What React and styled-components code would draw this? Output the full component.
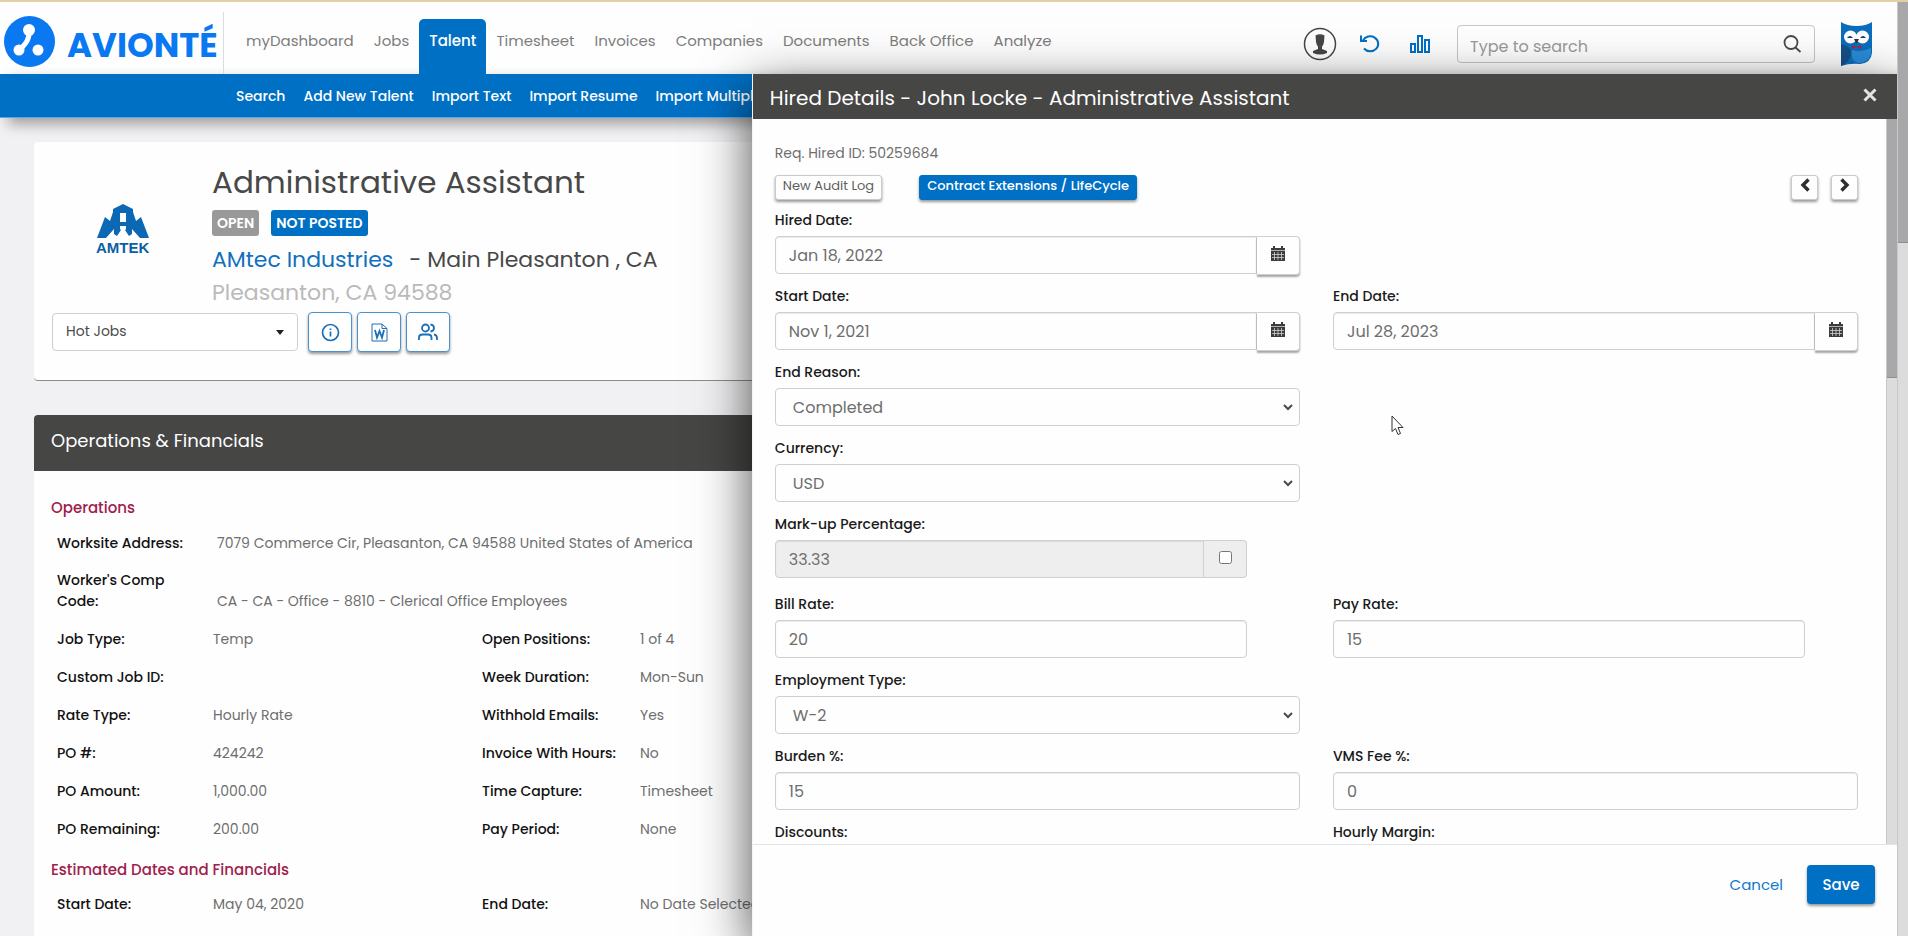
import React from 'react';
import styled, { createGlobalStyle, css } from 'styled-components';

const colors = {
  blue: '#0070c5',
  brand: '#0a78f0',
  dark: '#464645',
  grey: '#6e6e6e',
  crimson: '#a0204c',
  border: '#cfcfd3',
};

const GlobalStyle = createGlobalStyle`
  * { box-sizing: border-box; }
  body { margin: 0; background: #f1f1f3; }
  body, button, input, select { font-family: Poppins, Inter, "Open Sans", sans-serif; font-size: 15px; }
  a { text-decoration: none; }
`;

const menu = ['myDashboard', 'Jobs', 'Talent', 'Timesheet', 'Invoices', 'Companies', 'Documents', 'Back Office', 'Analyze'];

const subMenu = ['Search', 'Add New Talent', 'Import Text', 'Import Resume', 'Import Multiple'];

const operations = [
  ['Job Type:', 'Temp', 'Open Positions:', '1 of 4'],
  ['Custom Job ID:', '', 'Week Duration:', 'Mon-Sun'],
  ['Rate Type:', 'Hourly Rate', 'Withhold Emails:', 'Yes'],
  ['PO #:', '424242', 'Invoice With Hours:', 'No'],
  ['PO Amount:', '1,000.00', 'Time Capture:', 'Timesheet'],
  ['PO Remaining:', '200.00', 'Pay Period:', 'None'],
];

const Shell = styled.div`
  display: grid;
  grid-template-columns: minmax(0, 1fr) 11px;
  height: 100vh;
  overflow: hidden;
  border-top: 2px solid #e2cfa6;
`;

const Page = styled.div`
  position: relative;
  min-width: 0;
  overflow: hidden;
`;

const ScrollTrack = styled.div`
  width: 11px;
  background: #dcdcdc;
  border-left: 1px solid #c8c8c8;
`;

const ScrollThumb = styled.div`
  height: ${({ $size }) => $size};
  background: #a8a8aa;
  border-bottom: 1px solid #8e8e90;
`;

const Header = styled.header`
  display: flex;
  align-items: stretch;
  height: 72px;
  background: #fefefe;
`;

const Brand = styled.a`
  display: flex;
  align-items: center;
  gap: 12px;
  width: 224px;
  margin-top: 10px;
  padding: 4px 0 0 4px;
  border-right: 1px solid #dcdce0;
  color: ${colors.brand};
  font-size: 34px;
  font-weight: 700;
  line-height: 40px;

  svg { margin-bottom: 8px; }
`;

const Menu = styled.nav`
  display: flex;
  align-items: flex-end;
  padding-left: 12px;
`;

const MenuLink = styled.a`
  height: 55px;
  padding: 12px 10px 0;
  border-radius: 5px 5px 0 0;
  color: #7d7d7d;
  font-size: 15px;
  line-height: 20px;

  ${({ $active }) => $active && css`
    background: ${colors.blue};
    color: white;
    font-weight: 500;
  `}
`;

const Tools = styled.div`
  display: flex;
  align-items: center;
  margin-left: auto;
  padding: 12px 25px 0 0;
`;

const IconButton = styled.button`
  display: flex;
  align-items: center;
  justify-content: center;
  width: 50px;
  height: 40px;
  padding: 0;
  border: 0;
  background: none;
  color: ${({ $color }) => $color || colors.blue};
`;

const SearchBox = styled.label`
  display: flex;
  align-items: center;
  width: 358px;
  height: 38px;
  margin: 0 26px 0 12px;
  padding: 0 12px;
  border: 1px solid #c6c6c8;
  border-radius: 4px;

  input {
    flex: 1;
    min-width: 0;
    padding: 4px 0 0;
    border: 0;
    outline: 0;
    background: none;
    font-size: 16px;
  }
  input::placeholder { color: #9a9a9a; }
`;

const SubNav = styled.nav`
  display: flex;
  gap: 18px;
  height: 44px;
  padding: 11px 0 0 236px;
  background: ${colors.blue};
  border-bottom: 1px solid #5aa6e0;
  box-shadow: 8px 6px 14px rgba(0, 0, 0, .35);

  a {
    color: white;
    font-size: 14px;
    font-weight: 500;
    line-height: 22px;
    white-space: nowrap;
  }
`;

const Content = styled.main`
  display: flex;
  flex-direction: column;
  gap: 34px;
  padding: 24px 34px;
`;

const JobCard = styled.section`
  height: 239px;
  padding: 18px 18px 0;
  border-bottom: 1px solid #8c8c8c;
  border-radius: 4px;
  background: #fefefe;
`;

const JobTop = styled.div`
  display: grid;
  grid-template-columns: 142px 1fr;
  padding-left: 18px;
`;

const Amtek = styled.svg`
  width: 56px;
  margin: 44px 0 0 25px;
`;

const JobTitle = styled.h1`
  margin: 0;
  color: #484848;
  font-size: 31px;
  font-weight: 400;
  line-height: 44px;
`;

const Badges = styled.div`
  display: flex;
  gap: 12px;
  margin: 6px 0 7px;
`;

const Badge = styled.span`
  padding: 0 5px;
  border-radius: 3px;
  background: ${({ $color }) => $color};
  color: white;
  font-size: 14px;
  font-weight: 600;
  line-height: 26px;
`;

const JobLine = styled.p`
  display: flex;
  gap: 16px;
  margin: 0;
  color: ${({ $muted }) => ($muted ? '#bababa' : '#484848')};
  font-size: 22px;
  line-height: 33px;

  a { color: #1070c0; }
`;

const JobActions = styled.div`
  display: flex;
  gap: 5px;
  align-items: center;
  margin-top: 3px;
`;

const JobSelect = styled.label`
  position: relative;
  width: 246px;
  margin-right: 5px;

  select {
    appearance: none;
    width: 100%;
    height: 38px;
    padding: 0 13px 2px;
    border: 1px solid ${colors.border};
    border-radius: 4px;
    background: white;
    color: #4c4c4c;
    font-size: 14px;
  }

  svg {
    position: absolute;
    right: 14px;
    top: 17px;
    pointer-events: none;
  }
`;

const SquareButton = styled.button`
  display: flex;
  align-items: center;
  justify-content: center;
  width: 44px;
  height: 40px;
  padding: 0;
  border: 1px solid #4a92cf;
  border-radius: 4px;
  background: white;
  color: #1c6fb5;
  box-shadow: 0 2px 3px rgba(0, 0, 0, .4);
`;

const Panel = styled.section`
  border-radius: 4px 4px 0 0;
  background: #fefefe;
`;

const PanelTitle = styled.h2`
  margin: 0;
  padding: 0 17px 4px;
  border-radius: 4px 4px 0 0;
  background: ${colors.dark};
  color: white;
  font-size: 18px;
  font-weight: 400;
  line-height: 52px;
`;

const PanelBody = styled.div`
  padding: 22px 17px 60px;
`;

const GroupTitle = styled.h3`
  margin: 0;
  color: ${colors.crimson};
  font-size: 15px;
  font-weight: 500;
  line-height: 30px;
`;

const Details = styled.dl`
  display: grid;
  grid-template-columns: 156px 269px 158px 1fr;
  margin: 0 0 7px;
  padding-left: 6px;
  font-size: 14px;

  dt {
    color: #111;
    font-weight: 500;
    line-height: 38px;
  }
  dd {
    margin: 0;
    color: ${colors.grey};
    line-height: 38px;
    white-space: nowrap;
  }
`;

const WideDetails = styled(Details)`
  grid-template-columns: 160px 1fr;
  margin: 0;
  padding-top: 2px;

  dt, dd { line-height: 21px; }
  dt { padding: 8px 20px 8px 0; }
  dd { align-self: end; padding: 8px 0; }
`;

const Drawer = styled.aside`
  position: absolute;
  top: 72px;
  right: 0;
  bottom: 0;
  display: flex;
  flex-direction: column;
  width: calc(60% + 7px);
  border-left: 1px solid #f4f4f4;
  background: #fefefe;
  box-shadow: 0 16px 50px rgba(0, 0, 0, .7);
`;

const DrawerHeader = styled.header`
  display: flex;
  align-items: center;
  justify-content: space-between;
  height: 45px;
  padding: 0 14px 0 17px;
  background: ${colors.dark};

  h2 {
    margin: 0;
    padding-top: 2px;
    color: white;
    font-size: 20px;
    font-weight: 400;
    line-height: 30px;
  }
`;

const CloseButton = styled.button`
  width: 26px;
  height: 30px;
  padding: 0;
  border: 0;
  background: none;
`;

const DrawerBody = styled.div`
  display: flex;
  flex: 1;
  min-height: 0;
  overflow: hidden;
`;

const Form = styled.form`
  flex: 1;
  min-width: 0;
  padding: 23px 28px 0 22px;
`;

const HiredId = styled.p`
  margin: 0;
  color: ${colors.grey};
  font-size: 14px;
  line-height: 22px;
`;

const Buttons = styled.div`
  display: flex;
  gap: 13px;
  margin: 11px 0 9px;
`;

const SmallButton = styled.button`
  height: 25px;
  padding: 0 7px 3px;
  border: 1px solid ${({ $primary }) => ($primary ? colors.blue : '#cacaca')};
  border-radius: 3px;
  background: ${({ $primary }) => ($primary ? colors.blue : '#fefefe')};
  color: ${({ $primary }) => ($primary ? 'white' : '#5e5e5e')};
  font-size: 13px;
  font-weight: ${({ $primary }) => ($primary ? 500 : 400)};
  line-height: 20px;
  box-shadow: 0 2px 3px rgba(0, 0, 0, .4);

  & + & { margin-left: 24px; }
`;

const Pager = styled.div`
  display: flex;
  gap: 13px;
  margin-left: auto;
`;

const PagerButton = styled(SmallButton)`
  width: 27px;
  padding: 0 4px;
  & + & { margin-left: 0; }
`;

const Fields = styled.div`
  display: grid;
  grid-template-columns: 1fr 1fr;
  column-gap: 33px;
`;

const Row = styled.div`
  grid-column: ${({ $right }) => ($right ? 2 : 1)};
  width: ${({ $short }) => ($short ? '90%' : '100%')};
  margin-bottom: ${({ $gap }) => $gap || '11px'};

  label {
    display: block;
    margin-bottom: 5px;
    color: #1a1a1a;
    font-size: 14px;
    font-weight: 500;
    line-height: 22px;
  }
`;

const control = css`
  width: 100%;
  height: 38px;
  border: 1px solid ${colors.border};
  border-radius: 4px;
  background: #fefefe;
  color: ${colors.grey};
  font-size: 16px;
`;

const Input = styled.input`
  ${control}
  padding: 0 13px;
  box-shadow: inset 0 1px 1px rgba(0, 0, 0, .08);
  &:disabled { background: #eee; }
`;

const Select = styled.select`
  ${control}
  appearance: none;
  display: block;
  padding: 1px 30px 0 17px;
`;

const SelectBox = styled.div`
  position: relative;

  svg {
    position: absolute;
    right: 7px;
    top: 16px;
    pointer-events: none;
  }
`;

const Group = styled.div`
  display: flex;

  ${Input} {
    flex: 1;
    min-width: 0;
    border-radius: 4px 0 0 4px;
  }
`;

const AddonButton = styled.button`
  width: 43px;
  height: 39px;
  margin-bottom: -1px;
  padding: 0;
  border: 1px solid ${colors.border};
  border-left: 0;
  border-radius: 0 4px 4px 0;
  background: #fefefe;
  box-shadow: 0 2px 2px rgba(0, 0, 0, .35);
`;

const Addon = styled.span`
  display: flex;
  align-items: center;
  justify-content: center;
  width: 43px;
  padding-bottom: 3px;
  border: 1px solid ${colors.border};
  border-left: 0;
  border-radius: 0 4px 4px 0;
  background: #eee;

  input { margin: 0; }
`;

const DrawerFooter = styled.footer`
  display: flex;
  align-items: flex-start;
  justify-content: flex-end;
  gap: 24px;
  height: 92px;
  padding: 20px 22px 0;
  border-top: 1px solid #e3e3ea;
`;

const Cancel = styled.button`
  height: 39px;
  padding: 0;
  border: 0;
  background: none;
  color: #0f7acb;
  font-size: 15px;
`;

const Save = styled(Cancel)`
  width: 68px;
  border-radius: 4px;
  background: ${colors.blue};
  color: white;
  font-weight: 500;
  box-shadow: 0 2px 3px rgba(0, 0, 0, .4);
`;

const Cursor = styled.svg`
  position: absolute;
  left: 1391px;
  top: 413px;
`;

const BrandMark = () => (
  <svg width="51" height="51" viewBox="0 0 51 51">
    <circle cx="25.5" cy="25.5" r="25.5" fill="#0a78f0" />
    <path d="M25 14 C26 24 21 28 15 35" stroke="white" strokeWidth="5" fill="none" />
    <circle cx="25" cy="14" r="6" fill="white" />
    <circle cx="15" cy="34" r="5.5" fill="white" />
    <circle cx="34" cy="34" r="5.5" fill="white" />
  </svg>
);

const UserIcon = () => (
  <svg width="34" height="34" viewBox="0 0 34 34">
    <circle cx="17" cy="17" r="15.5" fill="white" stroke="#464645" strokeWidth="1.5" />
    <path d="M12.5 8.5 Q17 6 21.5 8.5 L21 15 Q20.5 18 19 19.5 V22 L24 24 V26 Q17 29 10 26 V24 L15 22 V19.5 Q13.5 18 13 15 Z" fill="#464645" />
  </svg>
);

const RefreshIcon = () => (
  <svg width="22" height="20" viewBox="0 0 22 20" fill="none" stroke="currentColor" strokeWidth="2">
    <path d="M4 6.5 A8 7.5 0 1 1 5 14.5" />
    <path d="M2 1.5 V7 H8" />
  </svg>
);

const ChartIcon = () => (
  <svg width="20" height="18" viewBox="0 0 20 18" fill="none" stroke="currentColor" strokeWidth="2">
    <rect x="1" y="9" width="4" height="8" />
    <rect x="8" y="1" width="4" height="16" />
    <rect x="15" y="5" width="4" height="12" />
  </svg>
);

const SearchIcon = () => (
  <svg width="19" height="18" viewBox="0 0 19 18" fill="none" stroke="#4a4a4a" strokeWidth="1.8">
    <circle cx="8" cy="7.5" r="6.5" />
    <path d="M12.5 12.5 L17.5 17" />
  </svg>
);

const Owl = () => (
  <svg width="31" height="44" viewBox="0 0 31 44">
    <path d="M0 0 Q6 4 15.5 4 Q25 4 31 0 V31 Q30 41 19 42 Q9 41 0 44 Z" fill="#0b6dbd" />
    <path d="M0 22 Q11 24 10 33 Q8 40 0 44 Z" fill="#164f86" />
    <path d="M11 28 Q20 31 30 26 V32 Q27 41 18 41 Q9 40 11 28" fill="#2a8bd8" />
    <circle cx="9.5" cy="15" r="6.5" fill="white" />
    <circle cx="21.5" cy="15" r="6.5" fill="white" />
    <path d="M6 16 Q9 12 12 16 Z M19 16 Q22 12 25 16 Z" fill="#1c3d63" />
    <path d="M13 17 H18 L15.5 22 Z" fill="#333" />
    <path d="M11 23 L15.5 25 L20 23 V27 L15.5 25 L11 27 Z" fill="#b5203c" />
  </svg>
);

const AmtekLogo = () => (
  <Amtek viewBox="0 0 56 54">
    <path d="M2 34 L10 13 L15 17 L18 8 V5 L28 0 L38 5 V8 L41 17 L46 13 L54 34 H45 L37 25 V30 L34 32 L28 23 L22 32 L19 30 V25 L11 34 Z" fill="#0c67b4" />
    <path d="M25 9 H31 V18 H25 Z M25 22 H31 V25 L28 29 L25 25 Z" fill="white" />
    <text x="1" y="49" fill="#0c5ea4" fontFamily="Liberation Sans, sans-serif" fontWeight="700" fontSize="15">AMTEK</text>
  </Amtek>
);

const InfoIcon = () => (
  <svg width="19" height="19" viewBox="0 0 19 19" fill="none" stroke="currentColor" strokeWidth="1.7">
    <circle cx="9.5" cy="9.5" r="8" />
    <path d="M9.5 8.5 V13.5 M9.5 5.5 V7" />
  </svg>
);

const WordIcon = () => (
  <svg width="17" height="19" viewBox="0 0 17 19" fill="none" stroke="currentColor">
    <path d="M1 1 H11 L16 5.5 V18 H1 Z M11 1 V5.5 H16" />
    <path d="M4 7 L6 14.5 L8.5 8 L11 14.5 L13 7" strokeWidth="1.8" />
  </svg>
);

const PeopleIcon = () => (
  <svg width="20" height="18" viewBox="0 0 20 18" fill="none" stroke="currentColor" strokeWidth="1.8">
    <circle cx="7.5" cy="5" r="3.5" />
    <path d="M1 17 V14.5 Q1 11.5 4.5 11.5 H10 Q13.5 11.5 13.5 14.5 V17 M12.5 1.5 Q16 2 16 5 Q16 8 12.5 8.5 M16 11.5 Q19 12 19 15 V17" />
  </svg>
);

const CalendarIcon = () => (
  <svg width="14" height="15" viewBox="0 0 14 15">
    <path d="M0 2 H2 V0 H4 V2 H10 V0 H12 V2 H14 V15 H0 Z" fill="#3c3c3c" />
    <path d="M0 4.5 H14 M1 8.5 H13 M1 11.5 H13 M3.5 6 V14 M7 6 V14 M10.5 6 V14" stroke="#d0d0d0" strokeWidth=".8" />
  </svg>
);

const ChevronIcon = ({ d }) => (
  <svg width="10" height="14" viewBox="0 0 10 14" fill="none" stroke="#2e2e2e" strokeWidth="3.4">
    <path d={d} />
  </svg>
);

const DateField = ({ id, label, value, right }) => (
  <Row $right={right}>
    <label htmlFor={id}>{label}</label>
    <Group>
      <Input id={id} defaultValue={value} />
      <AddonButton type="button" aria-label={label}><CalendarIcon /></AddonButton>
    </Group>
  </Row>
);

const SelectField = ({ id, label, value }) => (
  <Row>
    <label htmlFor={id}>{label}</label>
    <SelectBox>
      <Select id={id} defaultValue={value}>
        <option>{value}</option>
      </Select>
      <svg width="10" height="7" viewBox="0 0 10 7" fill="none" stroke="#4a4a4a" strokeWidth="2">
        <path d="M1 1 L5 5 L9 1" />
      </svg>
    </SelectBox>
  </Row>
);

const TextField = ({ id, label, value, right, short }) => (
  <Row $right={right} $short={short}>
    <label htmlFor={id}>{label}</label>
    <Input id={id} defaultValue={value} />
  </Row>
);

const HiredDetails = () => (
  <Drawer>
    <DrawerHeader>
      <h2>Hired Details - John Locke - Administrative Assistant</h2>
      <CloseButton aria-label="Close">
        <svg width="14" height="14" viewBox="0 0 14 14" stroke="#e4e4e4" strokeWidth="3">
          <path d="M1.5 1.5 L12.5 12.5 M12.5 1.5 L1.5 12.5" />
        </svg>
      </CloseButton>
    </DrawerHeader>
    <DrawerBody>
      <Form>
        <HiredId>Req. Hired ID: 50259684</HiredId>
        <Buttons>
          <SmallButton type="button">New Audit Log</SmallButton>
          <SmallButton type="button" $primary>Contract Extensions / LifeCycle</SmallButton>
          <Pager>
            <PagerButton type="button" aria-label="Previous"><ChevronIcon d="M8.5 1.5 L3 7 L8.5 12.5" /></PagerButton>
            <PagerButton type="button" aria-label="Next"><ChevronIcon d="M1.5 1.5 L7 7 L1.5 12.5" /></PagerButton>
          </Pager>
        </Buttons>
        <Fields>
          <DateField id="hired" label="Hired Date:" value="Jan 18, 2022" />
          <DateField id="start" label="Start Date:" value="Nov 1, 2021" />
          <DateField id="end" label="End Date:" value="Jul 28, 2023" right />
          <SelectField id="reason" label="End Reason:" value="Completed" />
          <SelectField id="currency" label="Currency:" value="USD" />
          <Row $short $gap="15px">
            <label htmlFor="markup">Mark-up Percentage:</label>
            <Group>
              <Input id="markup" defaultValue="33.33" disabled />
              <Addon><input type="checkbox" aria-label="Mark-up Percentage" /></Addon>
            </Group>
          </Row>
          <TextField id="bill" label="Bill Rate:" value="20" short />
          <TextField id="pay" label="Pay Rate:" value="15" short right />
          <SelectField id="employment" label="Employment Type:" value="W-2" />
          <TextField id="burden" label="Burden %:" value="15" />
          <TextField id="vms" label="VMS Fee %:" value="0" right />
          <TextField id="discounts" label="Discounts:" value="" />
          <TextField id="margin" label="Hourly Margin:" value="" right />
        </Fields>
      </Form>
      <ScrollTrack><ScrollThumb $size="259px" /></ScrollTrack>
    </DrawerBody>
    <DrawerFooter>
      <Cancel type="button">Cancel</Cancel>
      <Save type="button">Save</Save>
    </DrawerFooter>
  </Drawer>
);

const App = () => (
  <Shell>
    <GlobalStyle />
    <Page>
      <Header>
        <Brand href="#"><BrandMark />AVIONTÉ</Brand>
        <Menu>
          {menu.map(item => (
            <MenuLink key={item} href="#" $active={item === 'Talent'}>{item}</MenuLink>
          ))}
        </Menu>
        <Tools>
          <IconButton aria-label="Profile" $color="#464645"><UserIcon /></IconButton>
          <IconButton aria-label="Recent"><RefreshIcon /></IconButton>
          <IconButton aria-label="Reports"><ChartIcon /></IconButton>
          <SearchBox>
            <input placeholder="Type to search" aria-label="Type to search" />
            <SearchIcon />
          </SearchBox>
          <Owl />
        </Tools>
      </Header>
      <SubNav>
        {subMenu.map(item => <a key={item} href="#">{item}</a>)}
      </SubNav>
      <Content>
        <JobCard>
          <JobTop>
            <AmtekLogo />
            <div>
              <JobTitle>Administrative Assistant</JobTitle>
              <Badges>
                <Badge $color="#999">OPEN</Badge>
                <Badge $color={colors.blue}>NOT POSTED</Badge>
              </Badges>
              <JobLine><a href="#">AMtec Industries</a> <span>- Main Pleasanton , CA</span></JobLine>
              <JobLine $muted>Pleasanton, CA 94588</JobLine>
            </div>
          </JobTop>
          <JobActions>
            <JobSelect>
              <select aria-label="Job list"><option>Hot Jobs</option></select>
              <svg width="8" height="5"><path d="M0 0 H8 L4 5 Z" fill="#222" /></svg>
            </JobSelect>
            <SquareButton aria-label="Info"><InfoIcon /></SquareButton>
            <SquareButton aria-label="Word"><WordIcon /></SquareButton>
            <SquareButton aria-label="People"><PeopleIcon /></SquareButton>
          </JobActions>
        </JobCard>
        <Panel>
          <PanelTitle>Operations &amp; Financials</PanelTitle>
          <PanelBody>
            <GroupTitle>Operations</GroupTitle>
            <WideDetails>
              <dt>Worksite Address:</dt>
              <dd>7079 Commerce Cir, Pleasanton, CA 94588 United States of America</dd>
              <dt>Worker's Comp Code:</dt>
              <dd>CA - CA - Office - 8810 - Clerical Office Employees</dd>
            </WideDetails>
            <Details>
              {operations.map(([label, value, label2, value2]) => (
                <React.Fragment key={label}>
                  <dt>{label}</dt>
                  <dd>{value}</dd>
                  <dt>{label2}</dt>
                  <dd>{value2}</dd>
                </React.Fragment>
              ))}
            </Details>
            <GroupTitle>Estimated Dates and Financials</GroupTitle>
            <Details>
              <dt>Start Date:</dt>
              <dd>May 04, 2020</dd>
              <dt>End Date:</dt>
              <dd>No Date Selected</dd>
            </Details>
          </PanelBody>
        </Panel>
      </Content>
      <HiredDetails />
      <Cursor width="13" height="21" viewBox="0 0 13 21" fill="white" stroke="#333">
        <path d="M1 1 V16.5 L4.5 13.5 L7 19.5 L9.5 18.5 L7 12.5 H12 Z" />
      </Cursor>
    </Page>
    <ScrollTrack><ScrollThumb $size="241px" /></ScrollTrack>
  </Shell>
);

export default App;
